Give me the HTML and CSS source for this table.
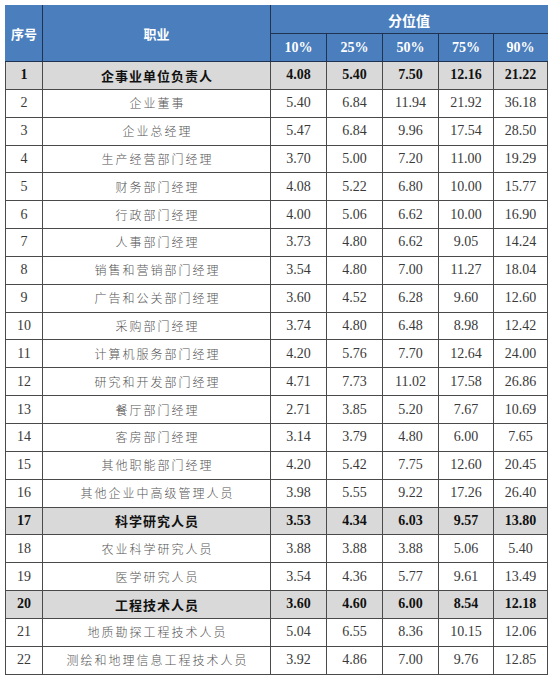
FILE: index.html
```html
<!DOCTYPE html>
<html lang="zh-CN">
<head>
<meta charset="utf-8">
<title>分位值</title>
<link rel="stylesheet" href="styles.css">
</head>
<body>
<div class="wrap">
<table class="tbl">
  <colgroup>
    <col class="c-no"><col class="c-job"><col class="c-v"><col class="c-v"><col class="c-v"><col class="c-v4"><col class="c-v5">
  </colgroup>
  <thead>
    <tr>
      <th rowspan="2" class="h-cjk h-no">序号</th>
      <th rowspan="2" class="h-cjk">职业</th>
      <th colspan="5" class="h-cjk h-group">分位值</th>
    </tr>
    <tr>
      <th class="h-pct">10%</th><th class="h-pct">25%</th><th class="h-pct">50%</th><th class="h-pct">75%</th><th class="h-pct">90%</th>
    </tr>
  </thead>
  <tbody>
    <tr class="grp"><td>1</td><td class="job">企事业单位负责人</td><td>4.08</td><td>5.40</td><td>7.50</td><td>12.16</td><td>21.22</td></tr>
    <tr><td>2</td><td class="job">企业董事</td><td>5.40</td><td>6.84</td><td>11.94</td><td>21.92</td><td>36.18</td></tr>
    <tr><td>3</td><td class="job">企业总经理</td><td>5.47</td><td>6.84</td><td>9.96</td><td>17.54</td><td>28.50</td></tr>
    <tr><td>4</td><td class="job">生产经营部门经理</td><td>3.70</td><td>5.00</td><td>7.20</td><td>11.00</td><td>19.29</td></tr>
    <tr><td>5</td><td class="job">财务部门经理</td><td>4.08</td><td>5.22</td><td>6.80</td><td>10.00</td><td>15.77</td></tr>
    <tr><td>6</td><td class="job">行政部门经理</td><td>4.00</td><td>5.06</td><td>6.62</td><td>10.00</td><td>16.90</td></tr>
    <tr><td>7</td><td class="job">人事部门经理</td><td>3.73</td><td>4.80</td><td>6.62</td><td>9.05</td><td>14.24</td></tr>
    <tr><td>8</td><td class="job">销售和营销部门经理</td><td>3.54</td><td>4.80</td><td>7.00</td><td>11.27</td><td>18.04</td></tr>
    <tr><td>9</td><td class="job">广告和公关部门经理</td><td>3.60</td><td>4.52</td><td>6.28</td><td>9.60</td><td>12.60</td></tr>
    <tr><td>10</td><td class="job">采购部门经理</td><td>3.74</td><td>4.80</td><td>6.48</td><td>8.98</td><td>12.42</td></tr>
    <tr><td>11</td><td class="job">计算机服务部门经理</td><td>4.20</td><td>5.76</td><td>7.70</td><td>12.64</td><td>24.00</td></tr>
    <tr><td>12</td><td class="job">研究和开发部门经理</td><td>4.71</td><td>7.73</td><td>11.02</td><td>17.58</td><td>26.86</td></tr>
    <tr><td>13</td><td class="job">餐厅部门经理</td><td>2.71</td><td>3.85</td><td>5.20</td><td>7.67</td><td>10.69</td></tr>
    <tr><td>14</td><td class="job">客房部门经理</td><td>3.14</td><td>3.79</td><td>4.80</td><td>6.00</td><td>7.65</td></tr>
    <tr><td>15</td><td class="job">其他职能部门经理</td><td>4.20</td><td>5.42</td><td>7.75</td><td>12.60</td><td>20.45</td></tr>
    <tr><td>16</td><td class="job">其他企业中高级管理人员</td><td>3.98</td><td>5.55</td><td>9.22</td><td>17.26</td><td>26.40</td></tr>
    <tr class="grp"><td>17</td><td class="job">科学研究人员</td><td>3.53</td><td>4.34</td><td>6.03</td><td>9.57</td><td>13.80</td></tr>
    <tr><td>18</td><td class="job">农业科学研究人员</td><td>3.88</td><td>3.88</td><td>3.88</td><td>5.06</td><td>5.40</td></tr>
    <tr><td>19</td><td class="job">医学研究人员</td><td>3.54</td><td>4.36</td><td>5.77</td><td>9.61</td><td>13.49</td></tr>
    <tr class="grp"><td>20</td><td class="job">工程技术人员</td><td>3.60</td><td>4.60</td><td>6.00</td><td>8.54</td><td>12.18</td></tr>
    <tr><td>21</td><td class="job">地质勘探工程技术人员</td><td>5.04</td><td>6.55</td><td>8.36</td><td>10.15</td><td>12.06</td></tr>
    <tr><td>22</td><td class="job">测绘和地理信息工程技术人员</td><td>3.92</td><td>4.86</td><td>7.00</td><td>9.76</td><td>12.85</td></tr>
  </tbody>
</table>
</div>
</body>
</html>
```
FILE: styles.css
```css
html, body {
  margin: 0;
  padding: 0;
  background: #ffffff;
}
.wrap {
  padding: 5px 0 0 5px;
}
.tbl {
  border-collapse: collapse;
  table-layout: fixed;
  width: 542px;
  font-family: "Liberation Serif", "Times New Roman", serif;
  font-size: 14px;
  color: #3a3a3a;
}
.c-no { width: 37px; }
.c-job { width: 228px; }
.c-v { width: 56px; }
.c-v4 { width: 55px; }
.c-v5 { width: 54px; }
.tbl th {
  background: #4a7ebd;
  color: #ffffff;
  font-weight: bold;
  border: 1px solid #1f3350;
  padding: 0;
  height: 27px;
  text-align: center;
  vertical-align: middle;
}
.tbl thead tr:first-child th {
  border-top: 1px solid #4a7ebd;
}
.tbl th:first-child {
  border-left: 1px solid #4a7ebd;
}
.tbl thead tr:first-child th:last-child,
.tbl thead tr:last-child th:last-child {
  border-right: 1px solid #4a7ebd;
}
.h-cjk {
  font-family: "Noto Sans CJK SC", "Noto Sans", sans-serif;
  font-size: 13px;
}
.h-no { font-size: 13px; }
.h-group { font-size: 14px; }
.h-pct {
  font-family: "Liberation Serif", "Times New Roman", serif;
  font-size: 14px;
}
.tbl td {
  border: 1px solid #4a4a4a;
  padding: 0;
  height: 26.85px;
  text-align: center;
  vertical-align: middle;
  line-height: 1;
}
.tbl td.job {
  font-family: "Noto Sans CJK SC", "Noto Sans", sans-serif;
  font-size: 12px;
  letter-spacing: 2px;
  text-indent: 2px;
  color: #555555;
  font-weight: 300;
}
.tbl tr.grp td {
  background: #d9d9d9;
  color: #111111;
  font-weight: bold;
}
.tbl tr.grp td.job {
  font-size: 13px;
  letter-spacing: 1px;
  text-indent: 1px;
  color: #111111;
  font-weight: bold;
}
```
